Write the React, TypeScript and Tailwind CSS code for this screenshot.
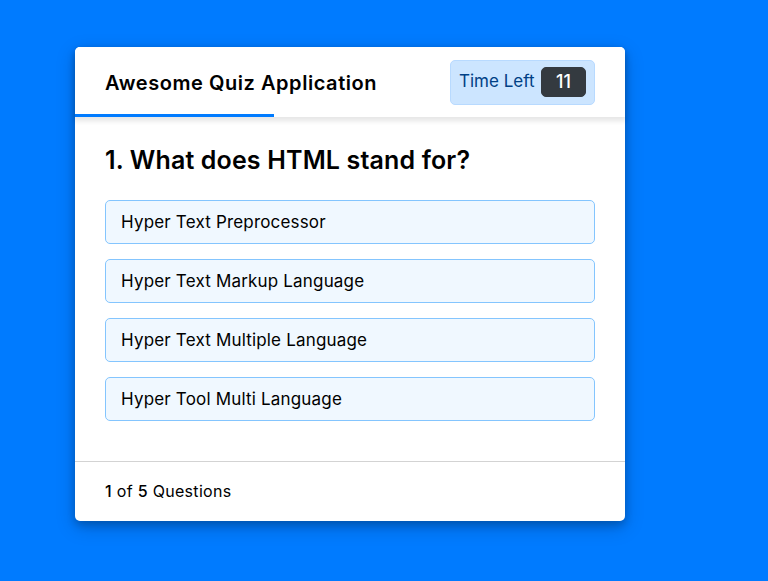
const options = [
  "Hyper Text Preprocessor",
  "Hyper Text Markup Language",
  "Hyper Text Multiple Language",
  "Hyper Tool Multi Language",
];

export default function App() {
  return (
    <div
      className="min-h-screen bg-[#007bff] pl-[75px] pt-[47px]"
      style={{ fontFamily: "Inter, 'Noto Sans', sans-serif" }}
    >
      <div className="w-[550px] rounded-[5px] bg-white shadow-[0_4px_8px_0_rgba(0,0,0,0.2),0_6px_20px_0_rgba(0,0,0,0.19)]">
        <header className="relative z-10 flex h-[70px] items-center justify-between rounded-t-[5px] bg-white px-[30px] shadow-[0_3px_5px_1px_rgba(0,0,0,0.1)]">
          <div className="pt-[1px] text-[20px] font-semibold tracking-[0.55px] text-black">Awesome Quiz Application</div>
          <div className="flex h-[45px] w-[145px] items-center justify-between rounded-[5px] border border-[#b8daff] bg-[#cce5ff] px-[8px] text-[#004085]">
            <div className="text-[17px] font-normal">Time Left</div>
            <div className="h-[30px] w-[45px] rounded-[5px] border border-[#343a40] bg-[#343a40] text-center text-[18px] font-medium leading-[28px] text-white">
              11
            </div>
          </div>
          <div className="absolute bottom-0 left-0 h-[3px] w-[199px] bg-[#007bff]" />
        </header>
        <section className="px-[30px] pb-[20px] pt-[25px]">
          <div className="text-[25px] font-semibold leading-[1.5] tracking-[0.15px] text-black">
            1. What does HTML stand for?
          </div>
          <div className="flex flex-col gap-[15px] py-[20px]">
            {options.map((o) => (
              <div
                key={o}
                className="rounded-[5px] border border-[#84c5fe] bg-[#f0f8ff] px-[15px] py-[8px] text-[17px] leading-[26px] tracking-[0.18px] text-black"
              >
                {o}
              </div>
            ))}
          </div>
        </section>
        <footer className="flex h-[60px] items-center border-t border-[#d3d3d3] px-[30px] text-[16px] tracking-[0.3px] text-black">
          <span>
            <span className="font-medium">1</span> of <span className="font-medium">5</span> Questions
          </span>
        </footer>
      </div>
    </div>
  );
}
